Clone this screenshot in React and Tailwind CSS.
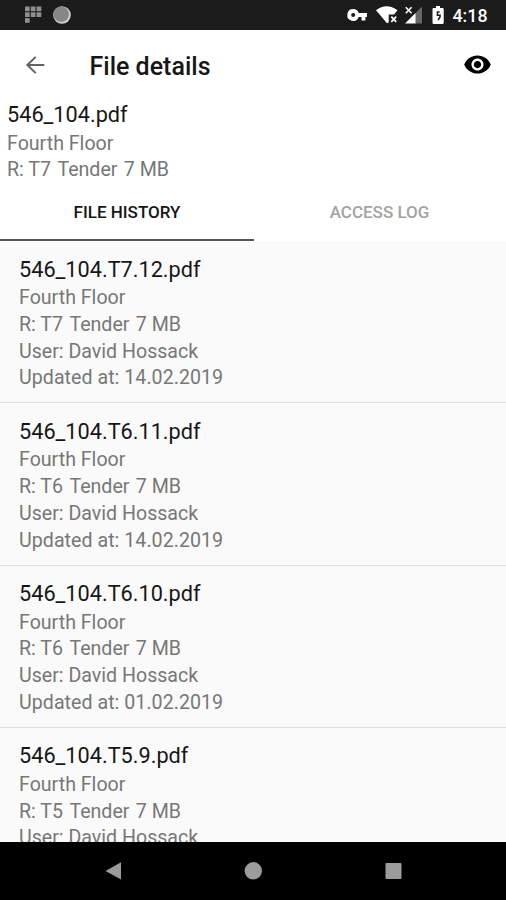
const history = [
  { name: "546_104.T7.12.pdf", revision: "T7", date: "14.02.2019" },
  { name: "546_104.T6.11.pdf", revision: "T6", date: "14.02.2019" },
  { name: "546_104.T6.10.pdf", revision: "T6", date: "01.02.2019" },
  { name: "546_104.T5.9.pdf", revision: "T5" },
];

function StatusBar() {
  return (
    <div className="h-[29.5px] shrink-0 bg-[#1b1b1b]">
      <svg width="506" height="29" viewBox="0 0 506 29" className="block">
        <g fill="#8f8f8f">
          <rect x="25" y="6.5" width="4.7" height="4.7" />
          <rect x="30.8" y="6.5" width="4.7" height="4.7" />
          <rect x="36.6" y="6.5" width="4.7" height="4.7" />
          <rect x="25" y="12.3" width="4.7" height="4.7" />
          <rect x="30.8" y="12.3" width="4.7" height="4.7" />
          <rect x="36.6" y="12.3" width="4.7" height="4.7" />
          <rect x="25" y="18.1" width="4.7" height="4.7" />
        </g>
        <circle cx="62" cy="15" r="8.8" fill="#d0d0d0" />
        <circle cx="61.2" cy="14.2" r="7.8" fill="#878787" />
        <path
          fill="#fff"
          fillRule="evenodd"
          d="M353.2 9a5.9 5.9 0 0 1 5.5 3.9h8.3v4.1h-1.6v3.6h-3.9V17h-2.8a5.9 5.9 0 1 1-5.5-8zm0 3.9a2 2 0 1 0 0 4 2 2 0 0 0 0-4z"
        />
        <path fill="#fff" d="M376 10.2Q386.5 2.5 397.500 10.2L394 14.5H388.7V22.5L387 23.2Z" />
        <path stroke="#fff" strokeWidth="1.8" d="m391.3 16.7 4.9 5.1m0-5.1-4.9 5.1" />
        <path fill="#666" d="M422 6.5V23.5H415V13.5Z" />
        <path fill="#fff" d="M415.5 13V23.5H405Z" />
        <path stroke="#fff" strokeWidth="1.6" d="m405.8 7.3 5.8 6m0-6-5.8 6" />
        <path fill="#fff" d="M436 6h4v1.9h2.5q1.2 0 1.2 1.2v13.6q0 1.2-1.2 1.2h-8.800q-1.2 0-1.2-1.2V9.1q0-1.2 1.2-1.2h2.3Z" />
        <path fill="none" stroke="#1b1b1b" strokeWidth="1.5" d="M439.600 12h-2.2v3.300h2.700v1.400l-2 3.300" />
        <text x="452.5" y="21.8" fill="#fff" fontFamily="Roboto, sans-serif" fontWeight="500" fontSize="18.5" textLength="35" lengthAdjust="spacingAndGlyphs">4:18</text>
      </svg>
    </div>
  );
}

function AppBar() {
  return (
    <header className="flex h-[71px] shrink-0 items-center pr-[14px] pl-[21px]">
      <svg width="28" height="28" viewBox="0 0 24 24" fill="#626262" className="shrink-0">
        <path d="M20 11.200H7.6l5.6-5.6L12 4.500l-7.800 7.500 7.800 7.500 1.200-1.100L7.6 12.800H20z" />
      </svg>
      <h1 className="mt-[3px] ml-[40.5px] text-[25px] leading-[30px] font-medium text-[#161616]">File details</h1>
      <svg viewBox="0 0 24 24" fill="#000" className="-mt-[1px] ml-auto h-[29px] w-[29px]">
        <path d="M12 4.500C7 4.500 2.730 7.610 1 12c1.730 4.390 6 7.500 11 7.500s9.270-3.110 11-7.500c-1.730-4.390-6-7.500-11-7.500zM12 17c-2.760 0-5-2.240-5-5s2.240-5 5-5 5 2.240 5 5-2.240 5-5 5zm0-8c-1.660 0-3 1.340-3 3s1.340 3 3 3 3-1.340 3-3-1.340-3-3-3z" />
      </svg>
    </header>
  );
}

function Summary({ name, revision }) {
  return (
    <>
      <div className="mb-[1.5px] text-[21.7px] leading-[28px] text-[#161616]">{name}</div>
      <div>Fourth Floor</div>
      <div className="flex gap-[6.4px]">
        <span>R: {revision}</span>
        <span>Tender</span>
        <span>7 MB</span>
      </div>
    </>
  );
}

function Entry({ item }) {
  return (
    <li className="h-[162.3px] shrink-0 border-b-[1.5px] border-[#e0e0e0] pt-[14.5px] pl-[19px] text-[19.6px] leading-[26.8px] text-[#777]">
      <Summary name={item.name} revision={item.revision} />
      <div>User: David Hossack</div>
      {item.date && <div className="tracking-[0.04px]">Updated at: {item.date}</div>}
    </li>
  );
}

export default function App() {
  return (
    <div className="flex h-[900px] w-[506px] flex-col overflow-hidden bg-white font-[Roboto,sans-serif]">
      <StatusBar />
      <AppBar />
      <section className="h-[84.5px] shrink-0 pt-[0.5px] pl-[7px] text-[19.6px] leading-[26.8px] text-[#777]">
        <Summary name="546_104.pdf" revision="T7" />
      </section>
      <nav className="flex h-[56px] shrink-0 text-[17px] leading-[20px] font-medium">
        <div className="flex w-[254px] justify-center border-b-[2.5px] border-[#555] pt-[17px] text-[#161616]">FILE HISTORY</div>
        <div className="flex flex-1 justify-center pt-[17px] pr-[1px] text-[#a3a3a3]">ACCESS LOG</div>
      </nav>
      <ul className="flex min-h-0 flex-1 flex-col overflow-hidden bg-[#fafafa]">
        {history.map((item) => (
          <Entry key={item.name} item={item} />
        ))}
      </ul>
      <footer className="h-[58px] shrink-0 bg-black">
        <svg width="506" height="58" viewBox="0 0 506 58" fill="#9c9c9c" className="block">
          <path d="M105.5 29 121 20.2V37.5Z" />
          <circle cx="253.3" cy="28.8" r="8.7" />
          <rect x="385.5" y="21" width="16" height="16" rx=".8" />
        </svg>
      </footer>
    </div>
  );
}
